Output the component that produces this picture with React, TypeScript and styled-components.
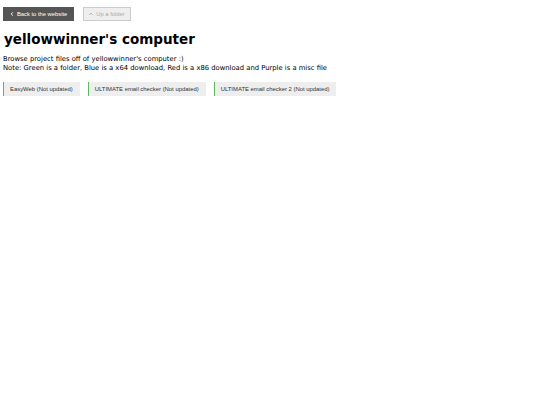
import React from "react";
import styled, { createGlobalStyle } from "styled-components";

const Global = createGlobalStyle`
  html, body { margin: 0; padding: 0; background: #fff; }
  body { font-family: "DejaVu Sans", Verdana, sans-serif; color: #000; }
`;

const Page = styled.div`
  padding: 7px 3px;
`;

const Toolbar = styled.div`
  display: flex;
  gap: 9px;
  align-items: center;
`;

const NavButton = styled.a<{ $disabled?: boolean }>`
  display: inline-flex;
  align-items: center;
  gap: 3px;
  height: 14px;
  box-sizing: border-box;
  padding: 0 ${(p) => (p.$disabled ? 5 : 6)}px;
  font-family: "Liberation Sans", Arial, sans-serif;
  font-size: 5.8px;
  text-decoration: none;
  background: ${(p) => (p.$disabled ? "#eeeeee" : "#555555")};
  color: ${(p) => (p.$disabled ? "#aaaaaa" : "#ffffff")};
  border: 1px solid ${(p) => (p.$disabled ? "#cccccc" : "#555555")};
`;

const Title = styled.h1`
  margin: 10px 0 0 1px;
  font-family: "DejaVu Sans", Verdana, sans-serif;
  font-weight: bold;
  font-size: 13.5px;
  line-height: 16px;
`;

const Intro = styled.p`
  margin: 8px 0 0 0;
  font-size: 6.8px;
  line-height: 9px;
`;

const Files = styled.div`
  display: flex;
  gap: 8px;
  margin-top: 9px;
`;

const FileCard = styled.a<{ $color: string }>`
  display: inline-flex;
  align-items: center;
  height: 14px;
  box-sizing: border-box;
  padding: 0 7px 0 6px;
  background: #eeeeee;
  border-left: 1px solid ${(p) => p.$color};
  font-family: "Liberation Sans", Arial, sans-serif;
  font-size: 5.9px;
  color: #333;
  text-decoration: none;
`;

const Chevron = ({ dir }: { dir: "left" | "up" }) => (
  <svg width="4" height="4" viewBox="0 0 10 10">
    {dir === "left" ? (
      <path d="M7 1 L3 5 L7 9" fill="none" stroke="currentColor" strokeWidth="2.5" />
    ) : (
      <path d="M1 7 L5 3 L9 7" fill="none" stroke="currentColor" strokeWidth="2.5" />
    )}
  </svg>
);

const files = [
  { name: "EasyWeb (Not updated)", color: "#5cb85c" },
  { name: "ULTIMATE email checker (Not updated)", color: "#5cb85c" },
  { name: "ULTIMATE email checker 2 (Not updated)", color: "#5cb85c" },
];

export default function App() {
  return (
    <>
      <Global />
      <Page>
        <Toolbar>
          <NavButton href="#">
            <Chevron dir="left" /> Back to the website
          </NavButton>
          <NavButton $disabled>
            <Chevron dir="up" /> Up a folder
          </NavButton>
        </Toolbar>
        <Title>yellowwinner's computer</Title>
        <Intro>
          Browse project files off of yellowwinner's computer :)
          <br />
          Note: Green is a folder, Blue is a x64 download, Red is a x86 download and Purple is a misc file
        </Intro>
        <Files>
          {files.map((f) => (
            <FileCard key={f.name} href="#" $color={f.color}>
              {f.name}
            </FileCard>
          ))}
        </Files>
      </Page>
    </>
  );
}
